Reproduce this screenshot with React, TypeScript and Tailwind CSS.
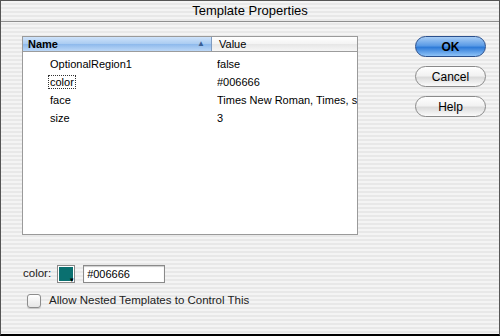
import React from "react";

const stripes = {
  backgroundImage:
    "repeating-linear-gradient(to bottom, #f4f4f4 0px, #f4f4f4 2px, #e8e8e8 2px, #e8e8e8 4px)",
};

const FONT = '"Liberation Sans", Arial, sans-serif';

function AquaButton({ label, primary }: { label: string; primary?: boolean }) {
  return (
    <div
      className={
        "h-[21px] w-[71px] rounded-full border flex items-center justify-center text-[12px] relative overflow-hidden " +
        (primary
          ? "border-[#2a4f8c] bg-[linear-gradient(to_bottom,#a8cdf5_0%,#5b9be6_45%,#2f7bd8_55%,#8fc3f7_100%)] text-black font-bold"
          : "border-[#8a8a8a] bg-[linear-gradient(to_bottom,#ffffff_0%,#f2f2f2_45%,#dcdcdc_55%,#fbfbfb_100%)] text-black")
      }
      style={{ fontFamily: FONT }}
    >
      <span className="relative">{label}</span>
    </div>
  );
}

export default function App() {
  const rows = [
    ["OptionalRegion1", "false"],
    ["color", "#006666"],
    ["face", "Times New Roman, Times, serif"],
    ["size", "3"],
  ];
  return (
    <div
      className="w-[500px] h-[336px] overflow-hidden flex flex-col border-x border-t border-[#555] border-b-2 border-b-black text-black"
      style={{ ...stripes, fontFamily: FONT }}
    >
      <div className="h-[21px] shrink-0 flex items-center justify-center border-b border-[#8e8e8e] text-[13px]">
        Template Properties
      </div>
      <div className="flex pt-[14px] pl-[21px] pr-[13px]">
        <div className="w-[336px] h-[199px] border border-[#9a9a9a] bg-white flex flex-col">
          <div className="h-[15px] flex text-[11px] border-b border-[#9c9c9c] shrink-0">
            <div className="w-[189px] flex items-center justify-between pl-[5px] pr-[6px] bg-[linear-gradient(to_bottom,#cfe3fa_0%,#a9cbf1_50%,#8db9ec_51%,#bcd8f7_100%)] border-r border-[#7f9bc0]">
              <span className="font-bold">Name</span>
              <span className="text-[8px] text-[#3a5f93] leading-none">▲</span>
            </div>
            <div className="flex-1 flex items-center pl-[7px] bg-[linear-gradient(to_bottom,#ffffff_0%,#f3f3f3_50%,#e6e6e6_51%,#f6f6f6_100%)]">
              Value
            </div>
          </div>
          <div className="pt-[3px] text-[11px]">
            {rows.map(([n, v], i) => (
              <div key={n} className="h-[18px] flex items-center">
                <div className="w-[194px] pl-[27px]">
                  <span
                    className={
                      i === 1
                        ? "border border-dotted border-[#333] px-[1px] -ml-[2px]"
                        : ""
                    }
                  >
                    {n}
                  </span>
                </div>
                <div className="flex-1 whitespace-nowrap overflow-hidden">{v}</div>
              </div>
            ))}
          </div>
        </div>
        <div className="ml-auto flex flex-col gap-[9px] pt-[0px]">
          <AquaButton label="OK" primary />
          <AquaButton label="Cancel" />
          <AquaButton label="Help" />
        </div>
      </div>
      <div className="flex items-center pl-[22px] mt-[30px] text-[11.5px]">
        <span className="text-[#222]">color:</span>
        <div className="ml-[6px] w-[18px] h-[18px] border border-[#888] bg-white p-[1px] relative">
          <div className="w-full h-full bg-[#0a7070]" />
          <span className="absolute right-[0px] bottom-[-1px] text-[7px] leading-none text-black">▾</span>
        </div>
        <div className="ml-[8px] w-[82px] h-[18px] border border-[#8a8a8a] bg-white flex items-center pl-[3px] text-[11px] shadow-[inset_0_1px_1px_rgba(0,0,0,0.2)]">
          #006666
        </div>
      </div>
      <div className="flex items-center pl-[26px] mt-[9px] text-[11.5px]">
        <div className="w-[14px] h-[14px] rounded-[3px] border border-[#8d8d8d] bg-[linear-gradient(to_bottom,#ffffff_0%,#e6e6e6_100%)] shadow-[0_1px_1px_rgba(0,0,0,0.15)]" />
        <span className="ml-[8px] text-[#222]">Allow Nested Templates to Control This</span>
      </div>
    </div>
  );
}
